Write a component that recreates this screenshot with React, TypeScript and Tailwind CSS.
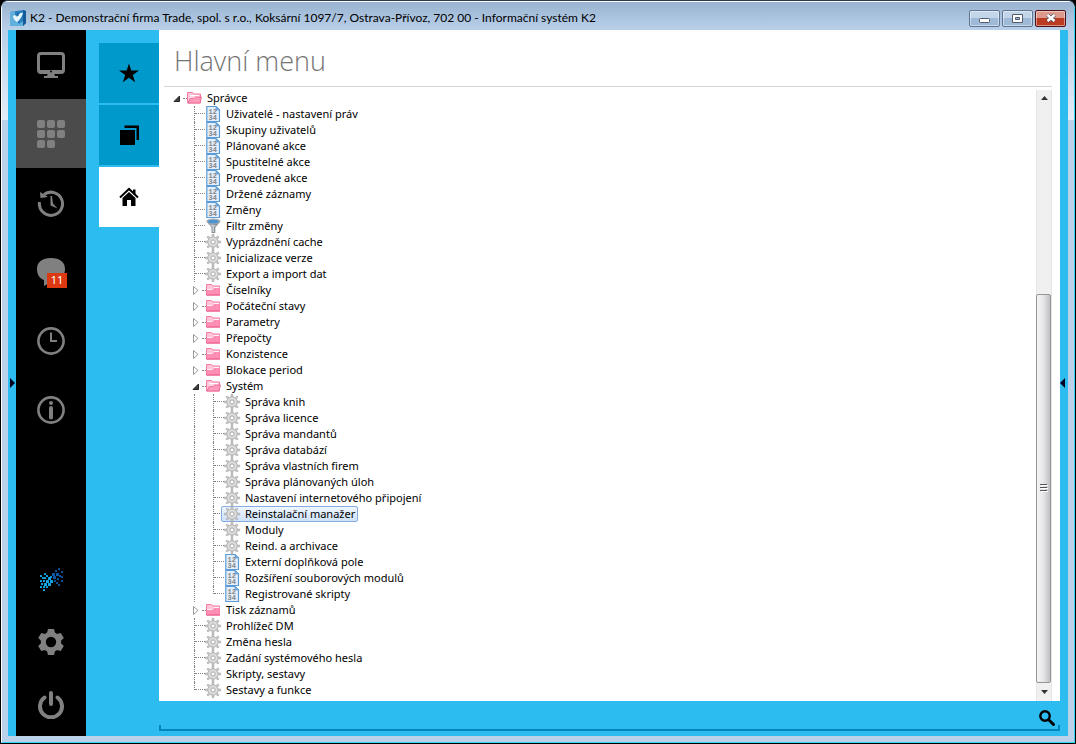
import { useState } from 'react'
import type { ReactNode } from 'react'

type IconKind = 'folder' | 'page' | 'gear' | 'funnel'

type Node = {
  label: string
  icon: IconKind
  children?: Node[]
}

const page = (label: string): Node => ({ label, icon: 'page' })
const gear = (label: string): Node => ({ label, icon: 'gear' })
const folder = (label: string, children: Node[] = []): Node => ({ label, icon: 'folder', children })

const TREE: Node = folder('Správce', [
  page('Uživatelé - nastavení práv'),
  page('Skupiny uživatelů'),
  page('Plánované akce'),
  page('Spustitelné akce'),
  page('Provedené akce'),
  page('Držené záznamy'),
  page('Změny'),
  { label: 'Filtr změny', icon: 'funnel' },
  gear('Vyprázdnění cache'),
  gear('Inicializace verze'),
  gear('Export a import dat'),
  folder('Číselníky'),
  folder('Počáteční stavy'),
  folder('Parametry'),
  folder('Přepočty'),
  folder('Konzistence'),
  folder('Blokace period'),
  folder('Systém', [
    gear('Správa knih'),
    gear('Správa licence'),
    gear('Správa mandantů'),
    gear('Správa databází'),
    gear('Správa vlastních firem'),
    gear('Správa plánovaných úloh'),
    gear('Nastavení internetového připojení'),
    gear('Reinstalační manažer'),
    gear('Moduly'),
    gear('Reind. a archivace'),
    page('Externí doplňková pole'),
    page('Rozšíření souborových modulů'),
    page('Registrované skripty'),
  ]),
  folder('Tisk záznamů'),
  gear('Prohlížeč DM'),
  gear('Změna hesla'),
  gear('Zadání systémového hesla'),
  gear('Skripty, sestavy'),
  gear('Sestavy a funkce'),
])

const teeth = (count: number) => Array.from({ length: count }, (_, i) => (i * 360) / count)

const NodeIcon = ({ kind, open }: { kind: IconKind; open: boolean }) => {
  if (kind === 'page') {
    return (
      <svg width="16" height="16" viewBox="0 0 16 16" className="shrink-0" aria-hidden="true">
        <path d="M.8.5h9.200l3.500 3.500v11.500H.8z" fill="#e3effa" stroke="#5c9bd6" strokeWidth="1.200" />
        <path d="M10 .5V4h3.500z" fill="#7db4e6" stroke="#5c9bd6" strokeWidth=".7" />
        <text x="2.500" y="7.500" fontSize="7" fontWeight="700" fontFamily="Liberation Mono, monospace" fill="#858585">12</text>
        <text x="2.500" y="13.700" fontSize="7" fontWeight="700" fontFamily="Liberation Mono, monospace" fill="#858585">34</text>
      </svg>
    )
  }
  if (kind === 'gear') {
    return (
      <svg width="16" height="16" viewBox="1 0 16 16" className="shrink-0 overflow-visible" aria-hidden="true">
        {teeth(8).map((a) => (
          <path key={a} d="M6.900 3.500 7.200.3h1.600l.3 3.200z" fill="#cfcfcf" stroke="#9c9c9c" strokeWidth=".6" transform={`rotate(${a} 8 8)`} />
        ))}
        <circle cx="8" cy="8" r="5.200" fill="#d4d4d4" stroke="#a6a6a6" strokeWidth=".6" />
        <circle cx="8" cy="8" r="3.700" fill="none" stroke="#e2e2e2" />
        <circle cx="8" cy="8" r="2" fill="#fff" stroke="#a0a0a0" strokeWidth=".8" />
      </svg>
    )
  }
  if (kind === 'funnel') {
    return (
      <svg width="16" height="16" viewBox="0 0 16 16" className="shrink-0" aria-hidden="true">
        <path d="M.3 3.500 5.500 9.500v5.500h3.800V9.500l5.200-6z" fill="#8b9299" />
        <path d="M3 6.500 6.500 9v5H8V9l2-2z" fill="#c9cfd4" />
        <ellipse cx="7.400" cy="3.300" rx="7.200" ry="2.800" fill="#a8afb5" />
        <ellipse cx="7.400" cy="3.600" rx="5.400" ry="1.800" fill="#4b93cf" />
      </svg>
    )
  }
  return (
    <svg width="16" height="16" viewBox="0 0 16 16" className="shrink-0" aria-hidden="true">
      <path d="M.5 13V2.500h5L7 4h6.500v9z" fill="#ffc4d6" stroke="#f27ba2" />
      {open ? (
        <>
          <path d="M3 5.500h9M3 7.200h9" stroke="#fff" />
          <path d="M1 13 3.300 8.500l4-.3L8.500 7h6L13 13z" fill="#ff9abb" stroke="#ec5f90" strokeWidth=".8" />
        </>
      ) : (
        <>
          <path d="M1 7.500h5l2-2h5.500V13H1z" fill="#ff8fb3" />
          <path d="M1 7.500h5l2-2h5.500" fill="none" stroke="#fff" strokeWidth=".8" />
          <path d="M.5 13h13.500" stroke="#e94f85" />
        </>
      )}
    </svg>
  )
}

// One 19px indent column; draws the dotted guide that runs through it
const Guide = ({ branch = false, last = false }: { branch?: boolean; last?: boolean }) => (
  <span className="flex h-4 w-[19px] shrink-0 pl-[7px]">
    <span className={`w-px border-l border-dotted border-[#808080] ${last ? 'h-2' : 'h-4'}`} />
    {branch && <span className="h-2 w-[10px] border-b border-dotted border-[#808080]" />}
  </span>
)

type RowProps = {
  node: Node
  depth: number
  last: boolean
  selected: string
  onSelect: (label: string) => void
}

const TreeRow = ({ node, depth, last, selected, onSelect }: RowProps) => {
  const [open, setOpen] = useState(Boolean(node.children?.length))
  const active = selected === node.label

  return (
    <li role="treeitem" aria-selected={active} aria-expanded={node.children ? open : undefined}>
      <div className="flex h-4 items-center">
        {depth > 0 && <span className="w-[19px] shrink-0" />}
        {depth > 1 && <Guide />}
        {node.children ? (
          <button aria-label={`Rozbalit ${node.label}`} onClick={() => setOpen(!open)} className="flex h-4 w-[19px] shrink-0 items-center gap-[2px] pl-[5px]">
            <svg width="8" height="9" viewBox="0 0 8 9" className="shrink-0" aria-hidden="true">
              {open ? <path d="M6.500 2v5.500H1z" fill="#404040" stroke="#262626" /> : <path d="M1.500.500v8l4.500-4z" fill="#fff" stroke="#999" />}
            </svg>
            <span className="w-[4px] border-b border-dotted border-[#808080]" />
          </button>
        ) : (
          <Guide branch last={last} />
        )}
        <button
          onClick={() => onSelect(node.label)}
          className={`-ml-1 flex h-4 items-center gap-1 rounded-xs border pr-[2px] pl-[3px] text-[11px] leading-[14px] whitespace-nowrap ${
            active ? 'border-[#84acdd] bg-linear-to-b from-[#eff6fe] to-[#cfe2fa]' : 'border-transparent'
          }`}
        >
          <NodeIcon kind={node.icon} open={open} />
          <span>{node.label}</span>
        </button>
      </div>
      {open && node.children && (
        <ul role="group">
          {node.children.map((child, i) => (
            <TreeRow key={child.label} node={child} depth={depth + 1} last={i === node.children!.length - 1} selected={selected} onSelect={onSelect} />
          ))}
        </ul>
      )}
    </li>
  )
}

const SideButton = ({ label, active, short, children }: { label: string; active?: boolean; short?: boolean; children: ReactNode }) => (
  <button aria-label={label} className={`flex w-full items-center justify-center ${short ? 'h-[63px]' : 'h-[69px]'} ${active ? 'bg-[#4b4b4b]' : ''}`}>
    {children}
  </button>
)

// x, y and size of the squares in the two crossing halves of the logo
const DOTS = [
  [5, 6, 2], [1, 8, 2], [7, 8, 2], [3, 10, 2], [5, 10, 2], [9, 10, 3], [1, 13, 2], [4, 13, 2], [7, 13, 3], [11, 13, 3],
  [2, 16, 2], [5, 16, 3], [9, 16, 3], [1, 19, 2], [4, 19, 2], [7, 19, 2], [4, 22, 2],
  [13, 6, 3], [11, 9, 2], [14, 9, 3], [16, 3, 2], [19, 1, 2], [17, 6, 3], [22, 4, 2], [20, 8, 2], [22, 9, 2], [15, 13, 2],
  [18, 11, 2], [22, 13, 2], [17, 15, 2], [19, 17, 2],
]

const Sidebar = () => (
  <nav className="flex w-[70px] shrink-0 flex-col bg-black text-[#808080]">
    <SideButton label="Plocha">
      <svg width="28" height="28" viewBox="0 0 28 28">
        <rect x="1.500" y="2.500" width="25" height="19" rx="2.500" fill="none" stroke="currentColor" strokeWidth="3" />
        <path d="M2 19h24v3H2zM11 22h6l1 3h3v2H7v-2h3z" fill="currentColor" />
        <circle cx="14" cy="20.500" r="1" fill="#000" />
      </svg>
    </SideButton>
    <SideButton label="Hlavní menu" active>
      <svg width="28" height="28" viewBox="0 0 28 28" fill="currentColor">
        {[0, 1, 2, 3, 4, 5, 6, 7].map((i) => (
          <rect key={i} x={(i % 3) * 10} y={Math.floor(i / 3) * 10} width="8" height="8" rx="2" />
        ))}
      </svg>
    </SideButton>
    <SideButton label="Historie">
      <svg width="28" height="28" viewBox="0 0 28 28">
        <path d="M2.500 13a11.600 11.600 0 1 0 4.500-7.500" fill="none" stroke="currentColor" strokeWidth="3" />
        <path d="M3 3 3.500 9 11 8zM13.500 7H15l1 7.500 4.500 5-7-3z" fill="currentColor" />
      </svg>
    </SideButton>
    <SideButton label="Zprávy">
      <span className="relative">
        <svg width="28" height="28" viewBox="0 0 28 28" fill="currentColor">
          <path d="M14 0c9 0 14 4 14 11s-4 12-13 12h-3c-1 2-2 4-5 5v-6c-5-2-7-6-7-11C0 4 5 0 14 0z" />
        </svg>
        <span className="absolute top-[15px] left-[10px] flex h-[15px] w-5 items-center justify-center bg-[#dc3912] text-[11px] text-white">11</span>
      </span>
    </SideButton>
    <SideButton label="Čas">
      <svg width="28" height="28" viewBox="0 0 28 28" fill="none" stroke="currentColor">
        <circle cx="14" cy="14" r="12.600" strokeWidth="2.600" />
        <path d="M14 5.500V14h6" strokeWidth="2" />
      </svg>
    </SideButton>
    <SideButton label="Informace">
      <svg width="28" height="28" viewBox="0 0 28 28" fill="none" stroke="currentColor">
        <circle cx="14" cy="14" r="12.600" strokeWidth="2.600" />
        <path d="M14 12v9.500" strokeWidth="4" strokeLinecap="round" />
        <circle cx="14" cy="7" r="2" fill="currentColor" stroke="none" />
      </svg>
    </SideButton>
    <div className="mt-auto">
      <SideButton label="K2" short>
        <svg width="24" height="24" viewBox="0 0 24 24">
          {DOTS.map(([x, y, size]) => (
            <rect key={`${x}-${y}`} x={x} y={y} width={size} height={size} rx=".6" fill={x < 13 ? '#12a8e8' : '#0b59a6'} />
          ))}
        </svg>
      </SideButton>
      <SideButton label="Nastavení" short>
        <svg width="28" height="28" viewBox="0 0 28 28">
          {teeth(6).map((a) => (
            <path key={a} d="M11 1h6l1.500 6h-9z" fill="currentColor" transform={`rotate(${a} 14 14)`} />
          ))}
          <circle cx="14" cy="14" r="7.700" fill="none" stroke="currentColor" strokeWidth="5" />
        </svg>
      </SideButton>
      <SideButton label="Ukončit" short>
        <svg width="28" height="28" viewBox="0 0 28 28" fill="none" stroke="currentColor" strokeLinecap="round">
          <path d="M7.500 6.500a11 11 0 1 0 13 0" strokeWidth="4" />
          <path d="M14 2v11" strokeWidth="4" />
        </svg>
      </SideButton>
    </div>
  </nav>
)

const Tabs = () => (
  <div className="flex w-[73px] shrink-0 flex-col items-end gap-[2px] pt-[13px]">
    <button aria-label="Oblíbené" className="flex size-[60px] items-center justify-center bg-[#0099cc]">
      <svg width="20" height="20" viewBox="0 0 20 20">
        <path d="m10 .5 2.300 7H20l-6.200 4.400 2.400 7.300L10 14.700l-6.200 4.500 2.400-7.300L0 7.500h7.700z" />
      </svg>
    </button>
    <button aria-label="Okna" className="flex size-[60px] items-center justify-center bg-[#0099cc]">
      <svg width="20" height="20" viewBox="0 0 20 20">
        <path d="M1 5h15v15H1zM5.500.500H20V15h-2.500V3h-12z" />
      </svg>
    </button>
    <button aria-label="Domů" className="flex size-[60px] items-center justify-center bg-white">
      <svg width="20" height="20" viewBox="0 0 20 20">
        <path d="m1 10.500 9-8.500 9 8.500" fill="none" stroke="#000" strokeWidth="2" />
        <path d="M14 2.500h2.500v5L14 5zM3.500 11 10 5l6.500 6v8H12v-6H8v6H3.500z" />
      </svg>
    </button>
  </div>
)

const Scrollbar = () => (
  <div className="flex w-4 shrink-0 flex-col border-x border-[#e6e6e6] bg-[#f0f0f0]">
    <button aria-label="Nahoru" className="flex h-4 items-center justify-center">
      <svg width="7" height="4" viewBox="0 0 7 4"><path d="M0 4 3.500 0 7 4z" fill="#333" /></svg>
    </button>
    <div className="flex grow flex-col justify-end">
      <div className="-ml-px flex h-[67.5%] items-center justify-center rounded-xs border border-[#959595] bg-linear-to-r from-[#f5f5f5] via-[#e6e6e8] to-[#bfc0c4]">
        <svg width="8" height="8" viewBox="0 0 8 8"><path d="M0 .5h7M0 3.500h7M0 6.500h7" stroke="#555" /><path d="M1 1.500h7M1 4.500h7M1 7.500h7" stroke="#fff" /></svg>
      </div>
    </div>
    <button aria-label="Dolů" className="flex h-[18px] items-center justify-center">
      <svg width="7" height="4" viewBox="0 0 7 4"><path d="M0 0h7L3.500 4z" fill="#333" /></svg>
    </button>
  </div>
)

const CAPTION = 'flex h-[17px] w-[31px] items-center justify-center rounded-xs border shadow-[inset_0_0_0_1px_rgba(255,255,255,0.45)]'

const TitleBar = () => (
  <header className="flex h-7 shrink-0 items-center bg-linear-to-b from-[#99b3d0] to-[#b9d0e9] pt-1 pr-2 pl-2">
    <svg width="16" height="16" viewBox="0 0 16 16" aria-hidden="true">
      <path d="M0 2 13 0l3 1v12l-3 3H0z" fill="#2a80bd" />
      <path d="M13 0l3 1v12l-3 3z" fill="#145a96" />
      <path d="M0 2l5-.8V9l4 5 4-3v5H0z" fill="#5fb0dd" />
      <path d="M3 6c1-1 3-1 4 1 1-3 5-5 6-4-1 3-3 7-6 9-2-1-4-4-4-6z" fill="#e8f6fd" />
      <path d="M7 3c1 0 1 2 1 3" stroke="#0c4f8b" fill="none" />
    </svg>
    <h1 className="ml-1 grow truncate font-['Lato','Noto_Sans',sans-serif] text-[12px] leading-4 text-black">
      K2 - Demonstrační firma Trade, spol. s r.o., Koksární 1097/7, Ostrava-Přívoz, 702 00 - Informační systém K2
    </h1>
    <div className="flex gap-[2px]">
      <button aria-label="Minimalizovat" className={`${CAPTION} border-[#5f7591] bg-linear-to-b from-[#c3d5e9] from-50% to-[#9fbad7] to-50%`}>
        <svg width="11" height="5" viewBox="0 0 11 5" className="mt-1"><rect x=".5" y=".5" width="10" height="4" rx="1" fill="#fff" stroke="#535a69" /></svg>
      </button>
      <button aria-label="Maximalizovat" className={`${CAPTION} border-[#5f7591] bg-linear-to-b from-[#c3d5e9] from-50% to-[#9fbad7] to-50%`}>
        <svg width="11" height="9" viewBox="0 0 11 9"><path d="M.5.500h10v8H.5zM3.500 3.500v2h4v-2z" fill="#fff" stroke="#535a69" fillRule="evenodd" /></svg>
      </button>
      <button aria-label="Zavřít" className={`${CAPTION} border-[#4f1018] bg-linear-to-b from-[#dc9a8c] from-50% to-[#bb3b22] to-50%`}>
        <svg width="12" height="10" viewBox="0 0 12 10"><path d="m2.500 2 7 6m0-6-7 6" stroke="#535a69" strokeWidth="4" /><path d="m2.500 2 7 6m0-6-7 6" stroke="#fff" strokeWidth="2.400" /></svg>
      </button>
    </div>
  </header>
)

const EdgeHandle = ({ label, path }: { label: string; path: string }) => (
  <button aria-label={label} className="flex w-2 shrink-0 items-center justify-center">
    <svg width="8" height="10" viewBox="0 0 8 10"><path d={path} fill="#000020" /></svg>
  </button>
)

const App = () => {
  const [selected, setSelected] = useState('Reinstalační manažer')

  return (
    <div className="h-screen bg-black font-['Noto_Sans','Open_Sans',sans-serif] text-black">
      <div className="flex h-full flex-col overflow-hidden rounded-t-lg border border-t-[#2b3a4c] border-r-black border-b-black border-l-black bg-[#bbd1ea]">
        <div className="flex min-h-0 grow flex-col rounded-t-[7px] border border-t-white border-r-[#35d4f0] border-b-[#35d4f0] border-l-white">
          <TitleBar />
          <div className="flex min-h-0 grow bg-linear-to-b from-[#b9d0e9] to-[#e4edf7] bg-[length:100%_90px] bg-no-repeat px-[6px] pb-[6px]">
            <div className="flex min-w-0 grow bg-[#2dbcef]">
              <EdgeHandle label="Levý panel" path="M2 0v10l5-5z" />
              <Sidebar />
              <Tabs />
              <main className="flex min-w-0 grow flex-col">
                <section className="flex min-h-0 grow flex-col bg-white pr-2 pl-[5px]">
                  <h2 className="h-[57px] shrink-0 border-b border-[#d6d6d6] pt-[11px] pl-[10px] font-['Open_Sans','Noto_Sans',sans-serif] text-[27px] leading-10 font-light text-[#757575]">Hlavní menu</h2>
                  <div className="flex min-h-0 grow pt-[3px]">
                    <ul role="tree" className="min-w-0 grow overflow-hidden pl-1">
                      <TreeRow node={TREE} depth={0} last selected={selected} onSelect={setSelected} />
                    </ul>
                    <Scrollbar />
                  </div>
                </section>
                <form className="relative mb-[5px] flex h-[30px] shrink-0 items-center" onSubmit={(e) => e.preventDefault()}>
                  <input aria-label="Hledat" className="h-6 min-w-0 grow bg-transparent px-2 text-[12px] outline-none" />
                  <button aria-label="Vyhledat" className="mt-1 mr-[5px]">
                    <svg width="16" height="16" viewBox="0 0 16 16" fill="none" stroke="#000">
                      <circle cx="6" cy="6" r="4.700" strokeWidth="2.400" />
                      <path d="m9.500 9.500 5 5" strokeWidth="3" strokeLinecap="round" />
                    </svg>
                  </button>
                  <span className="pointer-events-none absolute inset-x-0 bottom-0 h-[6px] border-x-2 border-b-2 border-[#0086b8]" />
                </form>
              </main>
              <EdgeHandle label="Pravý panel" path="M5 0v10L0 5z" />
            </div>
          </div>
        </div>
      </div>
    </div>
  )
}

export default App
